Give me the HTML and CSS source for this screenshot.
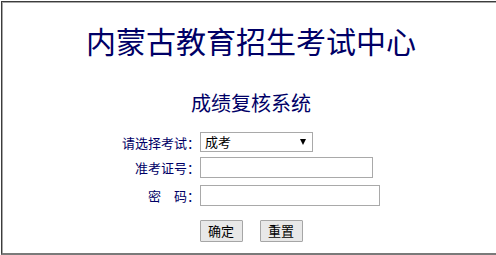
FILE: index.html
```html
<!DOCTYPE html>
<html lang="zh-CN">
<head>
<meta charset="utf-8">
<title>成绩复核系统</title>
<link rel="stylesheet" href="styles.css">
</head>
<body>
<div class="frame">
  <h1 class="title">内蒙古教育招生考试中心</h1>
  <h2 class="subtitle">成绩复核系统</h2>
  <form class="form">
    <div class="row row-select">
      <label class="label">请选择考试：</label>
      <span class="select-wrap">
        <select class="select">
          <option>成考</option>
        </select>
      </span>
    </div>
    <div class="row">
      <label class="label">准考证号：</label>
      <input class="input input-id" type="text">
    </div>
    <div class="row">
      <label class="label">密　码：</label>
      <input class="input input-pw" type="password">
    </div>
    <div class="buttons">
      <button class="btn" type="button">确定</button>
      <button class="btn" type="reset">重置</button>
    </div>
  </form>
</div>
</body>
</html>
```
FILE: styles.css
```css
html {
  overflow: hidden;
}
body {
  margin: 0;
  background: #ffffff;
  font-family: "Noto Sans CJK SC", "Noto Sans", sans-serif;
}
.frame {
  margin: 1px 0 0 1px;
  width: 498px;
  height: 228px;
  border-top: 1px solid #3c3c3c;
  border-left: 1px solid #3c3c3c;
  border-bottom: 2px solid #7a7a7a;
  box-shadow: inset 1px 1px 0 #a8a8a8;
  padding-top: 23px;
  box-sizing: content-box;
  overflow: hidden;
}
.title {
  margin: 0;
  font-size: 30px;
  line-height: 30px;
  font-weight: normal;
  text-align: center;
  color: #000066;
}
.subtitle {
  margin: 38px 0 0;
  font-size: 20px;
  line-height: 20px;
  font-weight: normal;
  text-align: center;
  color: #000066;
}
.form {
  margin: 19px 0 0;
  display: flex;
  flex-direction: column;
}
.row {
  display: flex;
  align-items: center;
  height: 21px;
  margin-bottom: 7px;
}
.row-select {
  height: 20px;
  margin-bottom: 5px;
}
.label {
  width: 198px;
  text-align: right;
  font-size: 13px;
  line-height: 21px;
  color: #000066;
}
.select-wrap {
  position: relative;
  display: block;
  width: 113px;
  height: 20px;
}
.select-wrap::after {
  content: "";
  position: absolute;
  right: 7px;
  top: 7px;
  width: 0;
  height: 0;
  border-left: 3px solid transparent;
  border-right: 3px solid transparent;
  border-top: 6px solid #000000;
  pointer-events: none;
}
.select {
  appearance: none;
  -webkit-appearance: none;
  display: block;
  width: 113px;
  height: 20px;
  margin: 0;
  padding: 0 0 0 4px;
  border: 1px solid #a9a9a9;
  border-radius: 0;
  background: #ffffff;
  font-family: inherit;
  font-size: 13px;
  line-height: 18px;
  color: #000000;
  box-sizing: border-box;
}
.input {
  display: block;
  height: 21px;
  margin: 0;
  padding: 0 3px;
  border: 1px solid #a9a9a9;
  background: #ffffff;
  box-sizing: border-box;
  font-family: inherit;
  font-size: 13px;
}
.input-id {
  width: 173px;
}
.input-pw {
  width: 180px;
}
.buttons {
  display: flex;
  justify-content: center;
  gap: 17px;
  margin-top: 7px;
}
.btn {
  width: 43px;
  height: 22px;
  margin: 0;
  padding: 0;
  border: 1px solid #a6a6a6;
  border-radius: 1px;
  background: #e8e8e8;
  font-family: inherit;
  font-size: 13px;
  line-height: 20px;
  color: #000000;
}
```
